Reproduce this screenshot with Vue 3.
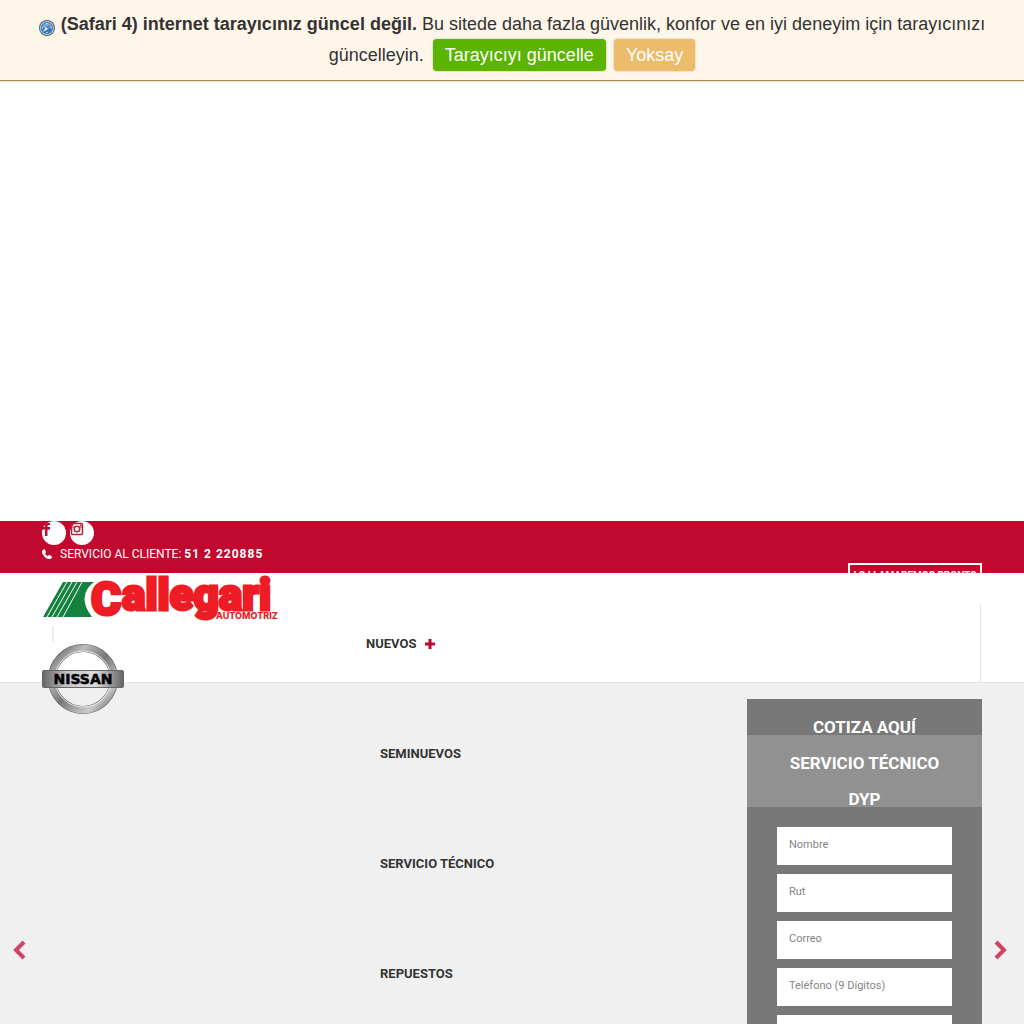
<script setup>
const fields = [
  { id: 'nombre', label: 'Nombre', type: 'text' },
  { id: 'rut', label: 'Rut', type: 'text' },
  { id: 'correo', label: 'Correo', type: 'email' },
  { id: 'telefono', label: 'Teléfono (9 Dígitos)', type: 'tel' },
]
const sections = ['Seminuevos', 'Servicio Técnico', 'Repuestos']
</script>

<template>
  <div class="page">
    <aside class="notice">
      <svg class="compass" viewBox="0 0 16 16" aria-hidden="true">
        <circle cx="8" cy="8" r="8" fill="#555e68" />
        <circle cx="8" cy="8" r="7" fill="#c8d0d8" />
        <circle cx="8" cy="8" r="6" fill="#297bc4" />
        <path d="M3 8a5 5 0 0 1 10 0" fill="#69afe0" />
        <path d="M3 8h1M12 8h1M8 3v1M8 12v1" stroke="#fff" />
        <path d="M12 4 9 9 4 12 7 7z" fill="#f4f6f8" />
        <path d="M12 4 9 9 7 7z" fill="#a34e5b" />
      </svg>
      <b>(Safari 4) internet tarayıcınız güncel değil.</b>
      Bu sitede daha fazla güvenlik, konfor ve en iyi deneyim için tarayıcınızı güncelleyin.
      <a class="update" href="#">Tarayıcıyı güncelle</a>
      <button class="ignore" type="button">Yoksay</button>
    </aside>

    <div class="topbar">
      <div class="container topbar-inner">
        <div>
          <div class="social">
            <a href="#" aria-label="Facebook">
              <svg viewBox="0 0 14 14"><path d="M8 2H6.500Q3 2 3 5v1H0v2.500h3V15h2.500V8.500H8V6H5.500V5q0-1 1-1H8z" fill="#c1082e" /></svg>
            </a>
            <a href="#" aria-label="Instagram">
              <svg viewBox="0 0 14 14"><rect x="1.500" y="2.500" width="11" height="11" rx="1" fill="none" stroke="#a52b3c" stroke-width="1.500" /><path d="M2 6h3M9 6h3" stroke="#a52b3c" /><circle cx="7" cy="8" r="2.800" fill="#fff" stroke="#a52b3c" stroke-width="1.500" /><path d="M10 3.500h1.500V5H10z" fill="#a52b3c" /></svg>
            </a>
          </div>
          <p class="phone">
            <svg viewBox="0 0 12 12" aria-hidden="true"><path d="M0 2 3 0 5 4 3.500 5.500Q5 8 7 8.500L8.500 7 12 9q0 3-3 3Q5 12 2 8T0 2" fill="#fff" /></svg>
            SERVICIO AL CLIENTE: <b>51 2 220885</b>
          </p>
        </div>
        <a class="callback" href="#">LO LLAMAREMOS PRONTO</a>
      </div>
    </div>

    <header class="header">
      <div class="container header-inner">
        <div class="brands">
          <a href="#" aria-label="Callegari Automotriz">
            <svg class="callegari" viewBox="0 0 240 52">
              <path d="M21 9H52Q34 23 50 44H1z" fill="#14823f" />
              <path d="M25 9 5 44M30 9 10 44M35 9 15 44M40 9 21 44" stroke="#fff" stroke-width="1" />
              <g fill="#ee1c25" stroke="#ee1c25" font-family="Roboto, sans-serif" font-weight="900">
                <text x="49" y="42" font-size="46" stroke-width="3">C</text>
                <text x="80" y="37" font-size="44" stroke-width="3">allegari</text>
                <text x="174" y="46" font-size="9" stroke-width="0" font-family="Inter, sans-serif" font-weight="800">AUTOMOTRIZ</text>
              </g>
            </svg>
          </a>
          <i class="divider"></i>
          <a href="#" aria-label="Nissan">
            <svg class="nissan" viewBox="0 0 82 72">
              <defs>
                <linearGradient id="ring" x1="0" y1="0" x2="1" y2="1">
                  <stop offset="0" stop-color="#555" /><stop offset=".25" stop-color="#bbb" /><stop offset=".5" stop-color="#777" /><stop offset=".8" stop-color="#ccc" /><stop offset="1" stop-color="#555" />
                </linearGradient>
                <linearGradient id="plate" x1="0" x2="1">
                  <stop offset="0" stop-color="#666" /><stop offset=".3" stop-color="#c6c6c6" /><stop offset=".65" stop-color="#ddd" /><stop offset="1" stop-color="#666" />
                </linearGradient>
              </defs>
              <circle cx="41" cy="36" r="31" fill="none" stroke="#555" stroke-width="8" />
              <circle cx="41" cy="36" r="31" fill="none" stroke="url(#ring)" stroke-width="7" />
              <circle cx="41" cy="36" r="28" fill="none" stroke="#e7e7e7" stroke-width="1" />
              <rect x="0" y="27" width="82" height="18" rx="2" fill="#666" />
              <rect x="1" y="28" width="80" height="16" rx="1" fill="url(#plate)" />
              <text x="41" y="41" text-anchor="middle" font-family="DejaVu Sans, sans-serif" font-size="14" font-weight="700" stroke="#000" stroke-width=".5">NISSAN</text>
            </svg>
          </a>
        </div>
        <nav>
          <ul class="menu">
            <li class="first">
              <a href="#">Nuevos
                <svg viewBox="0 0 10 10" aria-hidden="true"><path d="M5 0v10M0 5h10" stroke="#c1082e" stroke-width="3" /></svg>
              </a>
            </li>
            <li v-for="s in sections" :key="s"><a href="#">{{ s }}</a></li>
          </ul>
        </nav>
        <i class="edge"></i>
      </div>
    </header>

    <main class="hero">
      <button class="arrow" type="button" aria-label="Anterior">
        <svg viewBox="0 0 14 20"><path d="M12 2 4 10l8 8" /></svg>
      </button>
      <div class="container hero-inner">
        <form class="quote" @submit.prevent>
          <div class="tabs">
            <button class="active" type="button">COTIZA AQUÍ</button>
            <button type="button">SERVICIO TÉCNICO</button>
            <button type="button">DYP</button>
          </div>
          <div class="fields">
            <input v-for="f in fields" :key="f.id" :type="f.type" :name="f.id" :placeholder="f.label" :aria-label="f.label">
            <select aria-label="Opciones"><option></option></select>
          </div>
        </form>
      </div>
      <button class="arrow" type="button" aria-label="Siguiente">
        <svg viewBox="0 0 14 20"><path d="m2 2 8 8-8 8" /></svg>
      </button>
    </main>
  </div>
</template>

<style>
body { margin: 0; background: #fff; }
</style>

<style scoped>
* { box-sizing: border-box; }
.page { font-family: Roboto, sans-serif; color: #333; height: 100vh; overflow: hidden; }
a { color: inherit; text-decoration: none; }
svg { display: block; }
button { border: 0; font: inherit; cursor: pointer; }
.container { width: 100%; max-width: 940px; margin: 0 auto; }

.notice {
  min-height: 81px;
  margin-bottom: 440px;
  padding: 9px 32px 8px;
  text-align: center;
  font: 18px/30px "Liberation Sans", Arial, sans-serif;
  background: #fff6ea;
  border-bottom: 1px solid #a78d45;
  box-shadow: 0 1px 2px rgba(0, 0, 0, .15);
}
.compass { display: inline-block; width: 16px; height: 16px; margin-right: 6px; vertical-align: -6px; }
.update, .ignore {
  display: inline-block;
  margin-left: 4px;
  padding: 0 12px;
  line-height: 32px;
  border-radius: 4px;
  color: #fff;
  background: #5ab400;
  box-shadow: 0 0 2px rgba(0, 0, 0, .3);
}
.ignore { margin-left: 8px; background: #ecbc6b; }

.topbar { height: 52px; overflow: hidden; color: #fff; background: #c1082e; }
.topbar-inner { display: flex; justify-content: space-between; align-items: flex-start; }
.social { display: flex; gap: 4px; }
.social a { width: 24px; height: 24px; border-radius: 50%; background: #fff; }
.social svg { width: 14px; height: 14px; overflow: visible; }
.phone { display: flex; align-items: center; gap: 3px; margin: 0; font-size: 12px; line-height: 18px; }
.phone svg { width: 10px; height: 10px; margin-right: 5px; }
.phone b { letter-spacing: 1px; }
.callback { margin-top: 42px; padding: 4px 3px; border: 2px solid #fff; font-size: 10px; font-weight: 700; line-height: 14px; }

.header { position: relative; z-index: 1; height: 110px; border-bottom: 1px solid #e4e4e4; }
.header-inner { display: grid; grid-template-columns: 324px 1fr 2px; }
.callegari { width: 240px; height: 52px; }
.divider { display: block; width: 2px; height: 16px; margin: 1px 0 1px 10px; background: #eee; }
.nissan { width: 82px; height: 72px; }
.menu { margin: 0; padding: 61px 0 0; list-style: none; font-size: 13px; font-weight: 700; line-height: 20px; text-transform: uppercase; }
.menu li { height: 110px; padding-left: 14px; }
.menu .first { padding-left: 0; }
.menu a { display: inline-flex; align-items: center; gap: 9px; }
.menu svg { width: 10px; height: 10px; }
.edge { height: 78px; margin-top: 31px; border-left: 1px solid #e4e4e4; }

.hero { display: flex; min-height: 534px; background: #f0f0f0; }
.hero-inner { display: flex; justify-content: flex-end; align-items: flex-start; padding-top: 16px; }
.arrow { flex: 1; display: flex; padding: 257px 0 0 12px; background: none; }
.arrow svg { width: 14px; height: 20px; fill: none; stroke: #cf4463; stroke-width: 4; }
.quote { width: 235px; background: #787878; }
.tabs { display: grid; }
.tabs button { height: 36px; padding: 20px 0 0; color: #fff; background: #919191; font-size: 17px; font-weight: 700; line-height: 16px; }
.tabs .active { background: #787878; }
.fields { display: grid; gap: 9px; padding: 20px 30px; }
.fields input, .fields select { width: 100%; height: 38px; padding: 0 12px 4px; border: 0; border-radius: 0; background: #fff; font: 11px Roboto, sans-serif; appearance: none; }
.fields input::placeholder { color: #858585; opacity: 1; }
</style>
